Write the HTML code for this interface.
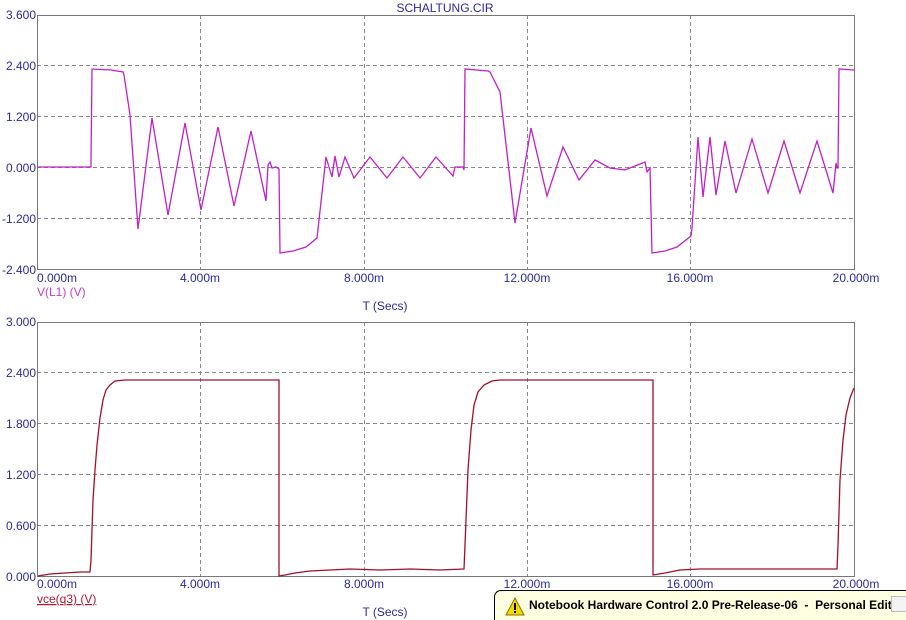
<!DOCTYPE html>
<html><head><meta charset="utf-8"><style>
body{margin:0;width:906px;height:620px;overflow:hidden;background:#fff;font-family:"Liberation Sans",sans-serif;position:relative}
svg{position:absolute;left:0;top:0}
.n{position:absolute;left:494px;top:590px;width:411px;height:29px;background:#ffffe1;border:1px solid #000;border-right:none;border-bottom:none;border-radius:7px 0 0 0;overflow:hidden}
.n span{position:absolute;left:34px;top:7px;font:bold 12px "Liberation Sans",sans-serif;color:#000;white-space:nowrap}
.x{position:absolute;left:396px;top:5px;width:14px;height:14px;border:1px solid #bbb;background:#f4f4f4}
</style></head><body>
<svg width="906" height="620" font-family="Liberation Sans, sans-serif" font-size="12">
<g stroke="#888" stroke-dasharray="4,3" stroke-width="1">
<line x1="37" y1="65.5" x2="854" y2="65.5"/><line x1="37" y1="116.5" x2="854" y2="116.5"/><line x1="37" y1="167.5" x2="854" y2="167.5"/><line x1="37" y1="218.5" x2="854" y2="218.5"/>
<line x1="200.5" y1="15" x2="200.5" y2="269"/><line x1="364.5" y1="15" x2="364.5" y2="269"/><line x1="527.5" y1="15" x2="527.5" y2="269"/><line x1="690.5" y1="15" x2="690.5" y2="269"/>
<line x1="37" y1="372.5" x2="854" y2="372.5"/><line x1="37" y1="423.5" x2="854" y2="423.5"/><line x1="37" y1="474.5" x2="854" y2="474.5"/><line x1="37" y1="525.5" x2="854" y2="525.5"/>
<line x1="200.5" y1="322" x2="200.5" y2="576"/><line x1="364.5" y1="322" x2="364.5" y2="576"/><line x1="527.5" y1="322" x2="527.5" y2="576"/><line x1="690.5" y1="322" x2="690.5" y2="576"/>
</g>
<g stroke="#777" fill="none">
<rect x="37.5" y="15.5" width="817" height="254"/>
<rect x="37.5" y="322.5" width="817" height="254"/>
</g>
<polyline fill="none" stroke="#c020c8" stroke-width="1.3" points="38,167 91,167 91,160 92,69 111,70 123,72 124,75 130,115 138,229 152,118 168,215 185,123 201,210 218,127 234,206 251,131 266,201 268,165 270,162 272,168 276,167 279,169 280,253 293,251 306,247 317,238 326,157 332,177 335,156 339,177 345,157 354,178 370,157 387,178 403,157 420,178 436,157 453,176 455,167 463,167 464,170 465,69 488,71 490,72 500,92 515,223 531,128 547,196 563,147 579,180 595,160 610,168 625,170 645,162 647,172 650,168 652,253 665,251 677,247 691,236 692,228 698,137 703,197 710,137 716,195 725,141 736,193 752,139 768,193 784,141 800,193 817,141 833,193 836,163 837,168 838,168 839,69 854,70"/>
<polyline fill="none" stroke="#a01028" stroke-width="1.3" points="38,576 50,574 65,573 80,572 90,572 91,560 93,500 95,470 97,445 100,418 103,400 106,390 110,385 115,381 125,380 279,380 279,576 285,575 295,573 310,571 330,570 350,569 380,570 410,569 440,570 464,569 466,520 468,470 471,430 474,405 478,392 484,385 492,381 500,380 653,380 653,575 665,573 680,570 700,569 837,569 838,545 840,480 843,440 846,415 850,398 854,388"/>
<g fill="#2a2a9a" text-anchor="end">
<text x="36" y="19">3.600</text><text x="36" y="70">2.400</text><text x="36" y="121">1.200</text><text x="36" y="172">0.000</text><text x="36" y="223">-1.200</text><text x="36" y="274">-2.400</text>
<text x="36" y="326">3.000</text><text x="36" y="377">2.400</text><text x="36" y="428">1.800</text><text x="36" y="479">1.200</text><text x="36" y="530">0.600</text><text x="36" y="581">0.000</text>
</g>
<g fill="#2a2a9a" text-anchor="middle">
<text x="445" y="12">SCHALTUNG.CIR</text>
<text x="57" y="282">0.000m</text><text x="200" y="282">4.000m</text><text x="364" y="282">8.000m</text><text x="527" y="282">12.000m</text><text x="690" y="282">16.000m</text><text x="856" y="282">20.000m</text>
<text x="57" y="588">0.000m</text><text x="200" y="588">4.000m</text><text x="364" y="588">8.000m</text><text x="527" y="588">12.000m</text><text x="690" y="588">16.000m</text><text x="856" y="588">20.000m</text>
<text x="385" y="310">T (Secs)</text><text x="385" y="616">T (Secs)</text>
</g>
<text x="37" y="296" fill="#c040c8">V(L1) (V)</text>
<text x="37" y="603" fill="#b01830" text-decoration="underline">vce(q3) (V)</text>
</svg>
<div class="n">
<svg width="20" height="20" style="left:10px;top:6px"><polygon points="10,1 19,18 1,18" fill="#f5d800" stroke="#8a7000"/><rect x="9" y="6" width="2" height="7" fill="#000"/><rect x="9" y="14" width="2" height="2" fill="#000"/></svg>
<span>Notebook Hardware Control 2.0 Pre-Release-06 &nbsp;- &nbsp;Personal Editi</span>
<div class="x"></div>
</div>
</body></html>
